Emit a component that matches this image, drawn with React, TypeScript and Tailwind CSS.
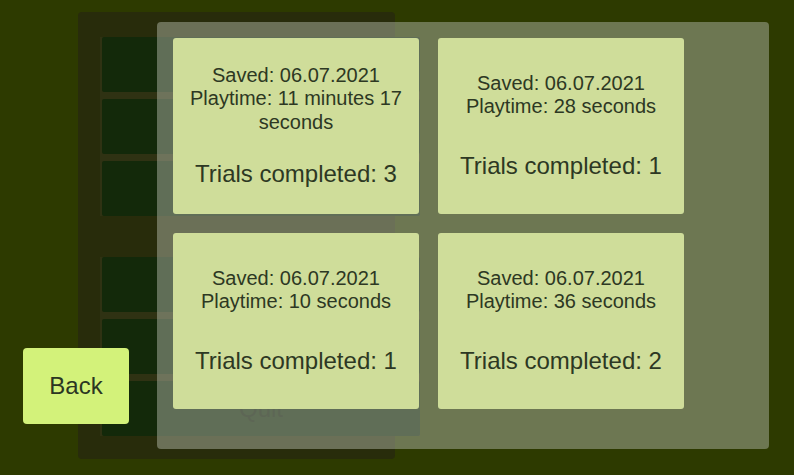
const saves = [
  { saved: "06.07.2021", playtime: "11 minutes 17 seconds", trials: 3 },
  { saved: "06.07.2021", playtime: "28 seconds", trials: 1 },
  { saved: "06.07.2021", playtime: "10 seconds", trials: 1 },
  { saved: "06.07.2021", playtime: "36 seconds", trials: 2 },
]

const menuGroups = [["", "", ""], ["", "", "Quit"]]

function MenuButton({ label }: { label: string }) {
  return (
    <div className="flex h-[55px] w-[318px] items-center justify-center rounded-[2px] bg-[#13290a] text-[24px] text-[#0c1806]">
      {label}
    </div>
  )
}

function SaveCard({ save }: { save: (typeof saves)[number] }) {
  return (
    <div className="flex h-[176px] w-[246px] flex-col items-center justify-evenly rounded-[3px] bg-[#cfdd9a] px-4 text-center text-[#2d3823]">
      <p className="text-[20px] leading-[23.5px]">
        Saved: {save.saved}
        <br />
        Playtime: {save.playtime}
      </p>
      <p className="text-[24px] leading-[28px]">Trials completed: {save.trials}</p>
    </div>
  )
}

export default function App() {
  return (
    <div className="relative h-[475px] w-[794px] overflow-hidden bg-[#2d3a00] font-['Liberation_Sans',Arial,sans-serif]">
      {/* main menu, behind the load dialog */}
      <div className="ml-[78px] mt-[12px] flex h-[447px] w-[317px] flex-col gap-[41px] rounded-[4px] bg-[#282c0b] pl-[22px] pt-[25px]">
        {menuGroups.map((group, i) => (
          <div key={i} className="flex w-[320px] flex-col items-end gap-[7px] bg-[#2f3213]">
            {group.map((label, j) => (
              <MenuButton key={j} label={label} />
            ))}
          </div>
        ))}
      </div>

      {/* load dialog */}
      <div className="absolute left-[157px] top-[22px] h-[427px] w-[612px] rounded-[4px] bg-[rgba(174,180,164,0.5)] p-4">
        <div className="grid grid-cols-[246px_246px] gap-[19px]">
          {saves.map((save, i) => (
            <SaveCard key={i} save={save} />
          ))}
        </div>
      </div>

      <button className="absolute left-[23px] top-[348px] flex h-[76px] w-[106px] items-center justify-center rounded-[4px] bg-[#d3f27a] text-[24px] text-[#2b3622]">
        Back
      </button>
    </div>
  )
}
